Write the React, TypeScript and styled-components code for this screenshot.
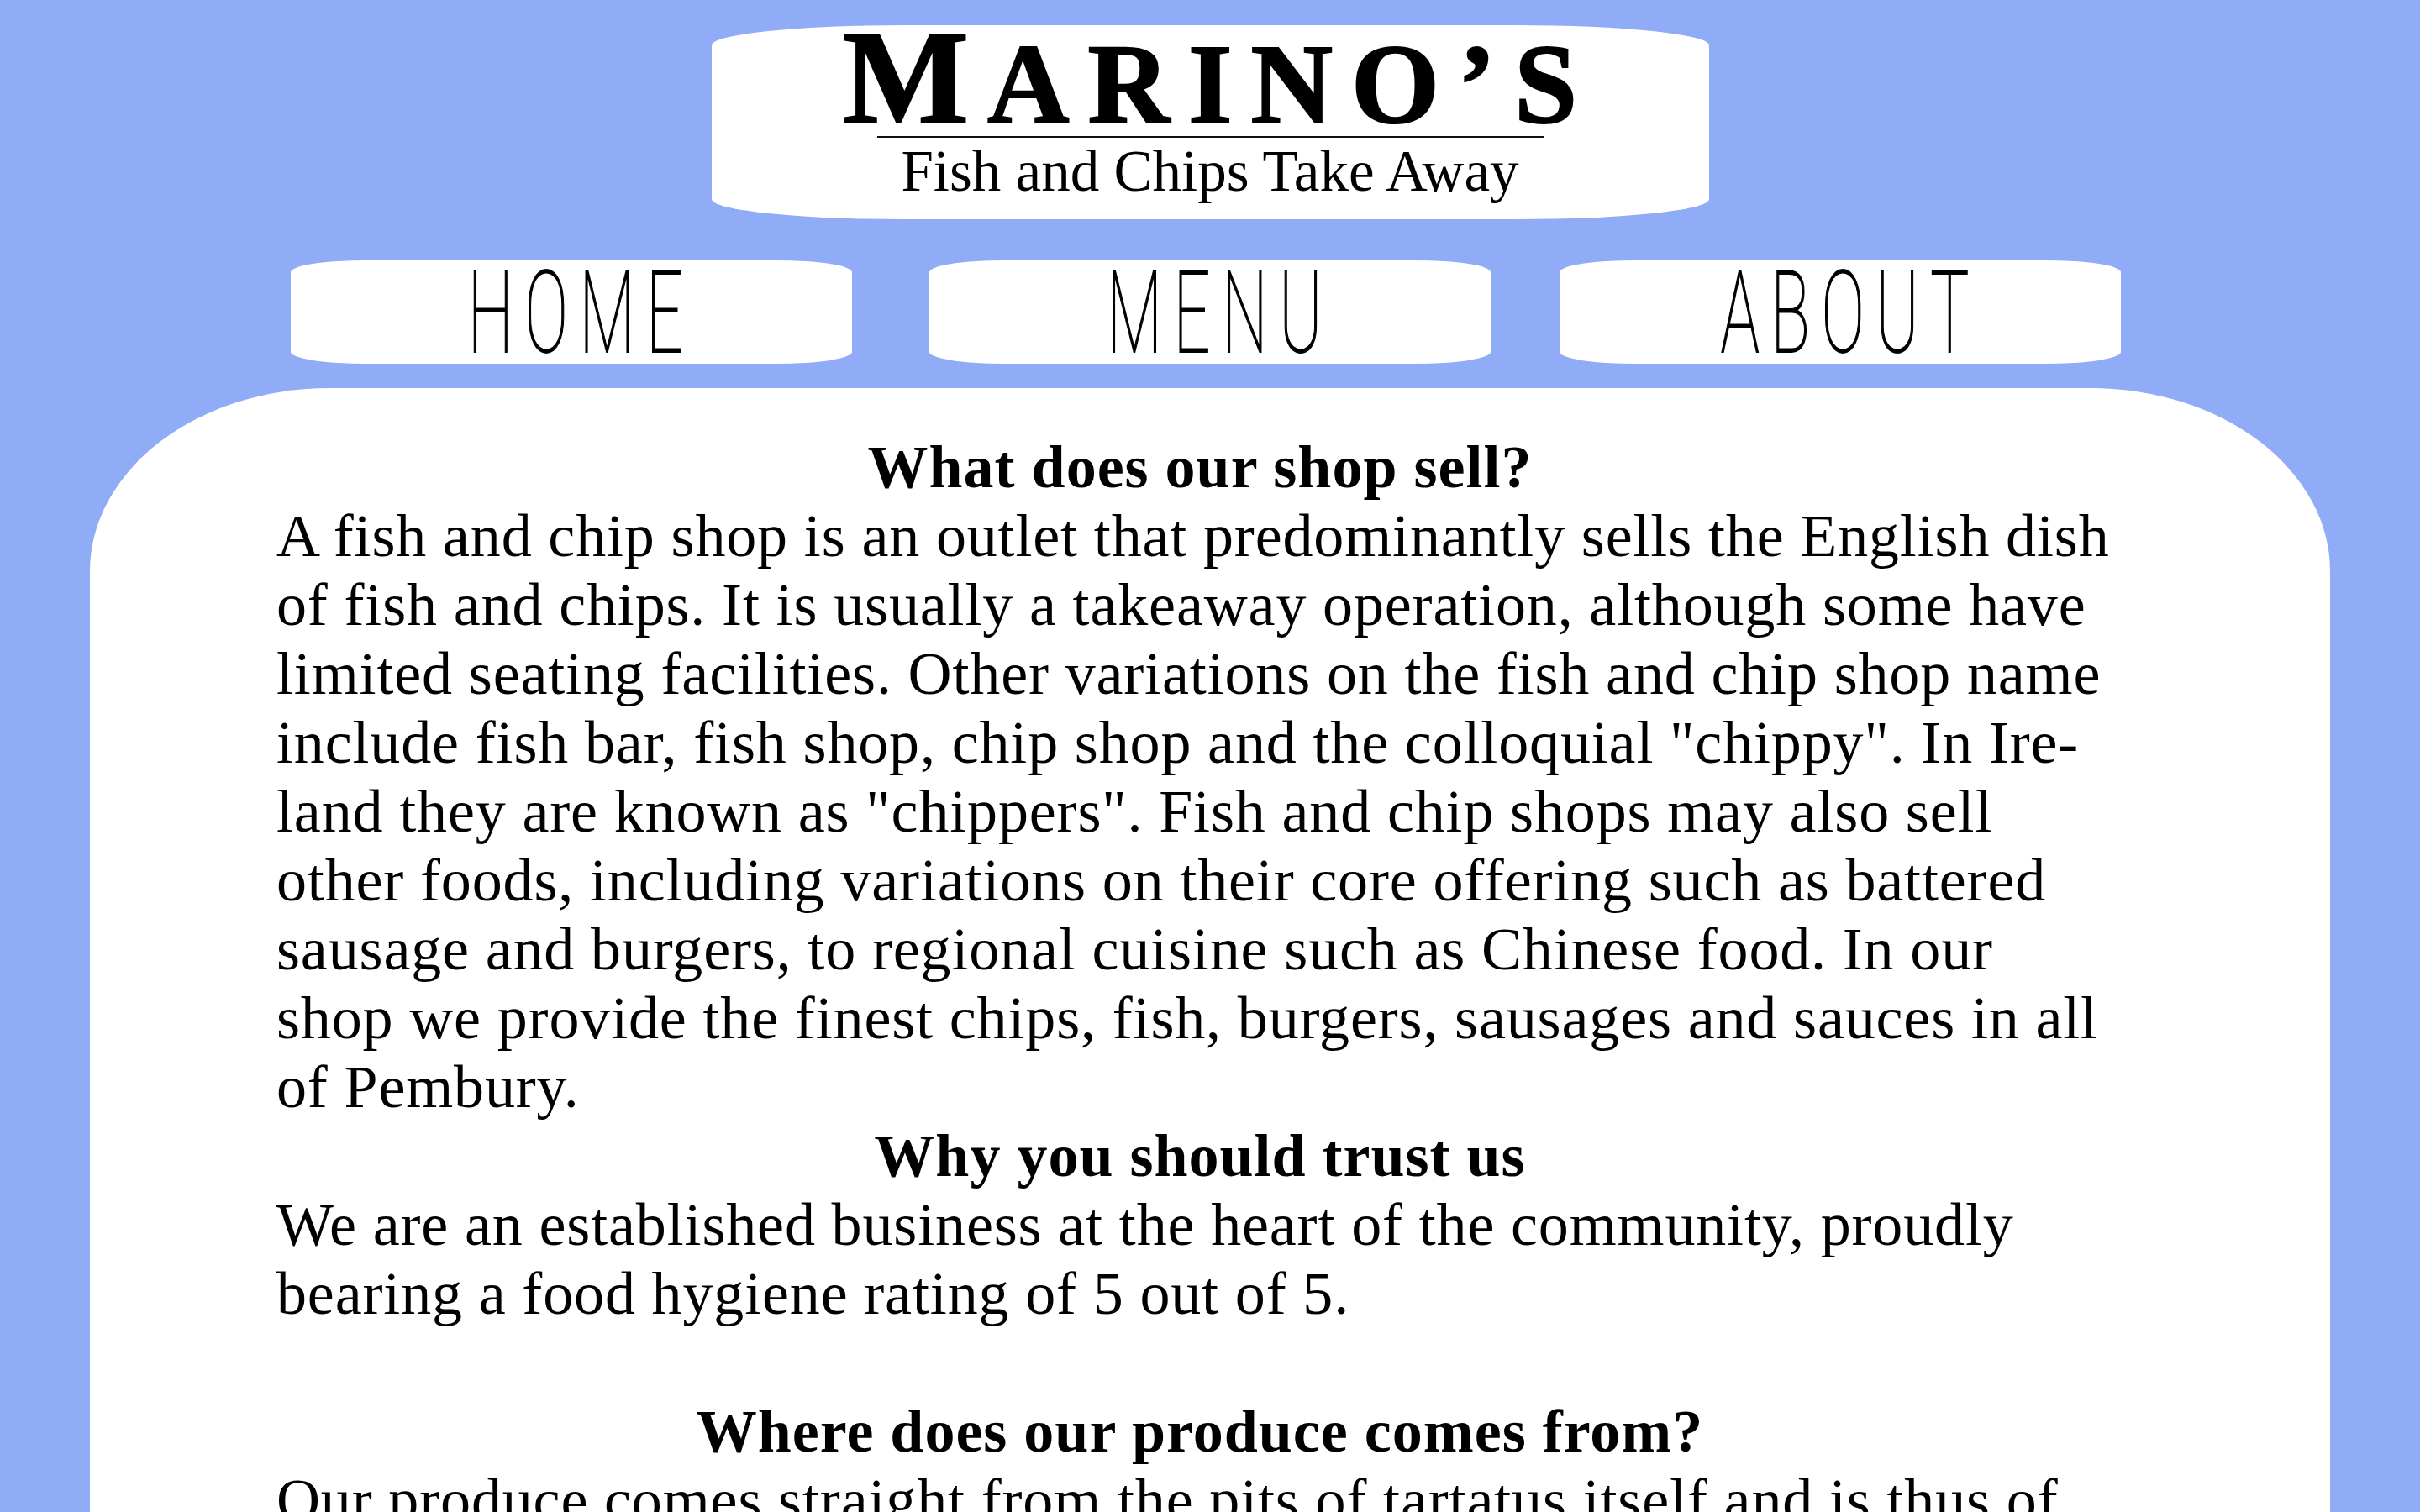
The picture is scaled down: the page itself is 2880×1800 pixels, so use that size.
import React from "react";
import styled, { createGlobalStyle } from "styled-components";

const Global = createGlobalStyle`
  html, body {
    margin: 0;
    padding: 0;
    background: #91acf7;
  }
  body {
    font-family: "Liberation Serif", "Times New Roman", serif;
    color: #000;
  }
`;

const Page = styled.div`
  display: flex;
  flex-direction: column;
  align-items: center;
  padding-top: 30px;
  min-height: 1800px;
  box-sizing: border-box;
`;

const Header = styled.header`
  width: 1187px;
  height: 231px;
  background: #fff;
  border-radius: 230px / 24px;
  display: flex;
  flex-direction: column;
  align-items: center;
  box-sizing: border-box;
`;

const Title = styled.h1`
  margin: 0;
  font-family: "Liberation Serif", "Times New Roman", serif;
  font-weight: 700;
  font-size: 159px;
  line-height: 124px;
  letter-spacing: 22px;
  margin-right: -22px;
  -webkit-text-stroke: 2px #000;
  white-space: nowrap;
`;

const SmallCap = styled.span`
  font-size: 135px;
  line-height: 100px;
`;

const Rule = styled.div`
  width: 793px;
  height: 2px;
  margin-top: 8px;
  background: #111;
`;

const Subtitle = styled.div`
  margin-top: 6px;
  font-size: 69px;
  line-height: 68px;
  white-space: nowrap;
`;

const Nav = styled.nav`
  align-self: stretch;
  display: flex;
  margin-top: 49px;
  padding-left: 346px;
`;

const NavButton = styled.a<{ $gap: number }>`
  width: 668px;
  height: 123px;
  margin-left: ${(p) => p.$gap}px;
  background: #fff;
  border-radius: 90px / 14px;
  display: flex;
  align-items: center;
  justify-content: center;
  text-decoration: none;
  color: #000;
  cursor: pointer;
`;

const NavLabel = styled.span`
  display: inline-block;
  font-family: Roboto, "Noto Sans", sans-serif;
  font-weight: 100;
  font-size: 135px;
  line-height: 123px;
  letter-spacing: 24px;
  margin-right: -24px;
  padding-top: 4px;
  -webkit-text-stroke: 1.8px #000;
  transform: scaleX(0.57);
  white-space: nowrap;
`;

const Main = styled.main`
  align-self: stretch;
  margin: 29px 107px 0;
  background: #fff;
  border-radius: 285px 285px 0 0 / 218px 218px 0 0;
  padding: 53px 246px 120px 222px;
  min-height: 1400px;
  box-sizing: border-box;
  font-size: 72px;
  line-height: 82px;
`;

const Heading = styled.h2`
  margin: 0;
  font-size: 72px;
  line-height: 82px;
  font-weight: 700;
  letter-spacing: 1px;
  text-align: center;
`;

const Paragraph = styled.p`
  margin: 0;
  letter-spacing: 0.85px;
`;

const Line = styled.span`
  display: block;
  white-space: nowrap;
`;

const Spacer = styled.div`
  height: 82px;
`;

const sections: { title: string; lines: string[]; spaceAfter?: boolean }[] = [
  {
    title: "What does our shop sell?",
    lines: [
      "A fish and chip shop is an outlet that predominantly sells the English dish",
      "of fish and chips. It is usually a takeaway operation, although some have",
      "limited seating facilities. Other variations on the fish and chip shop name",
      'include fish bar, fish shop, chip shop and the colloquial "chippy". In Ire-',
      'land they are known as "chippers". Fish and chip shops may also sell',
      "other foods, including variations on their core offering such as battered",
      "sausage and burgers, to regional cuisine such as Chinese food. In our",
      "shop we provide the finest chips, fish, burgers, sausages and sauces in all",
      "of Pembury.",
    ],
  },
  {
    title: "Why you should trust us",
    lines: [
      "We are an established business at the heart of the community, proudly",
      "bearing a food hygiene rating of 5 out of 5.",
    ],
    spaceAfter: true,
  },
  {
    title: "Where does our produce comes from?",
    lines: ["Our produce comes straight from the pits of tartatus itself and is thus of"],
  },
];

export default function App() {
  return (
    <>
      <Global />
      <Page>
        <Header>
          <Title>
            M<SmallCap>ARINO’S</SmallCap>
          </Title>
          <Rule />
          <Subtitle>Fish and Chips Take Away</Subtitle>
        </Header>
        <Nav>
          <NavButton $gap={0}>
            <NavLabel>HOME</NavLabel>
          </NavButton>
          <NavButton $gap={92}>
            <NavLabel>MENU</NavLabel>
          </NavButton>
          <NavButton $gap={82}>
            <NavLabel>ABOUT</NavLabel>
          </NavButton>
        </Nav>
        <Main>
          {sections.map((s) => (
            <React.Fragment key={s.title}>
              <Heading>{s.title}</Heading>
              <Paragraph>
                {s.lines.map((l) => (
                  <Line key={l}>{l}</Line>
                ))}
              </Paragraph>
              {s.spaceAfter && <Spacer />}
            </React.Fragment>
          ))}
        </Main>
      </Page>
    </>
  );
}
